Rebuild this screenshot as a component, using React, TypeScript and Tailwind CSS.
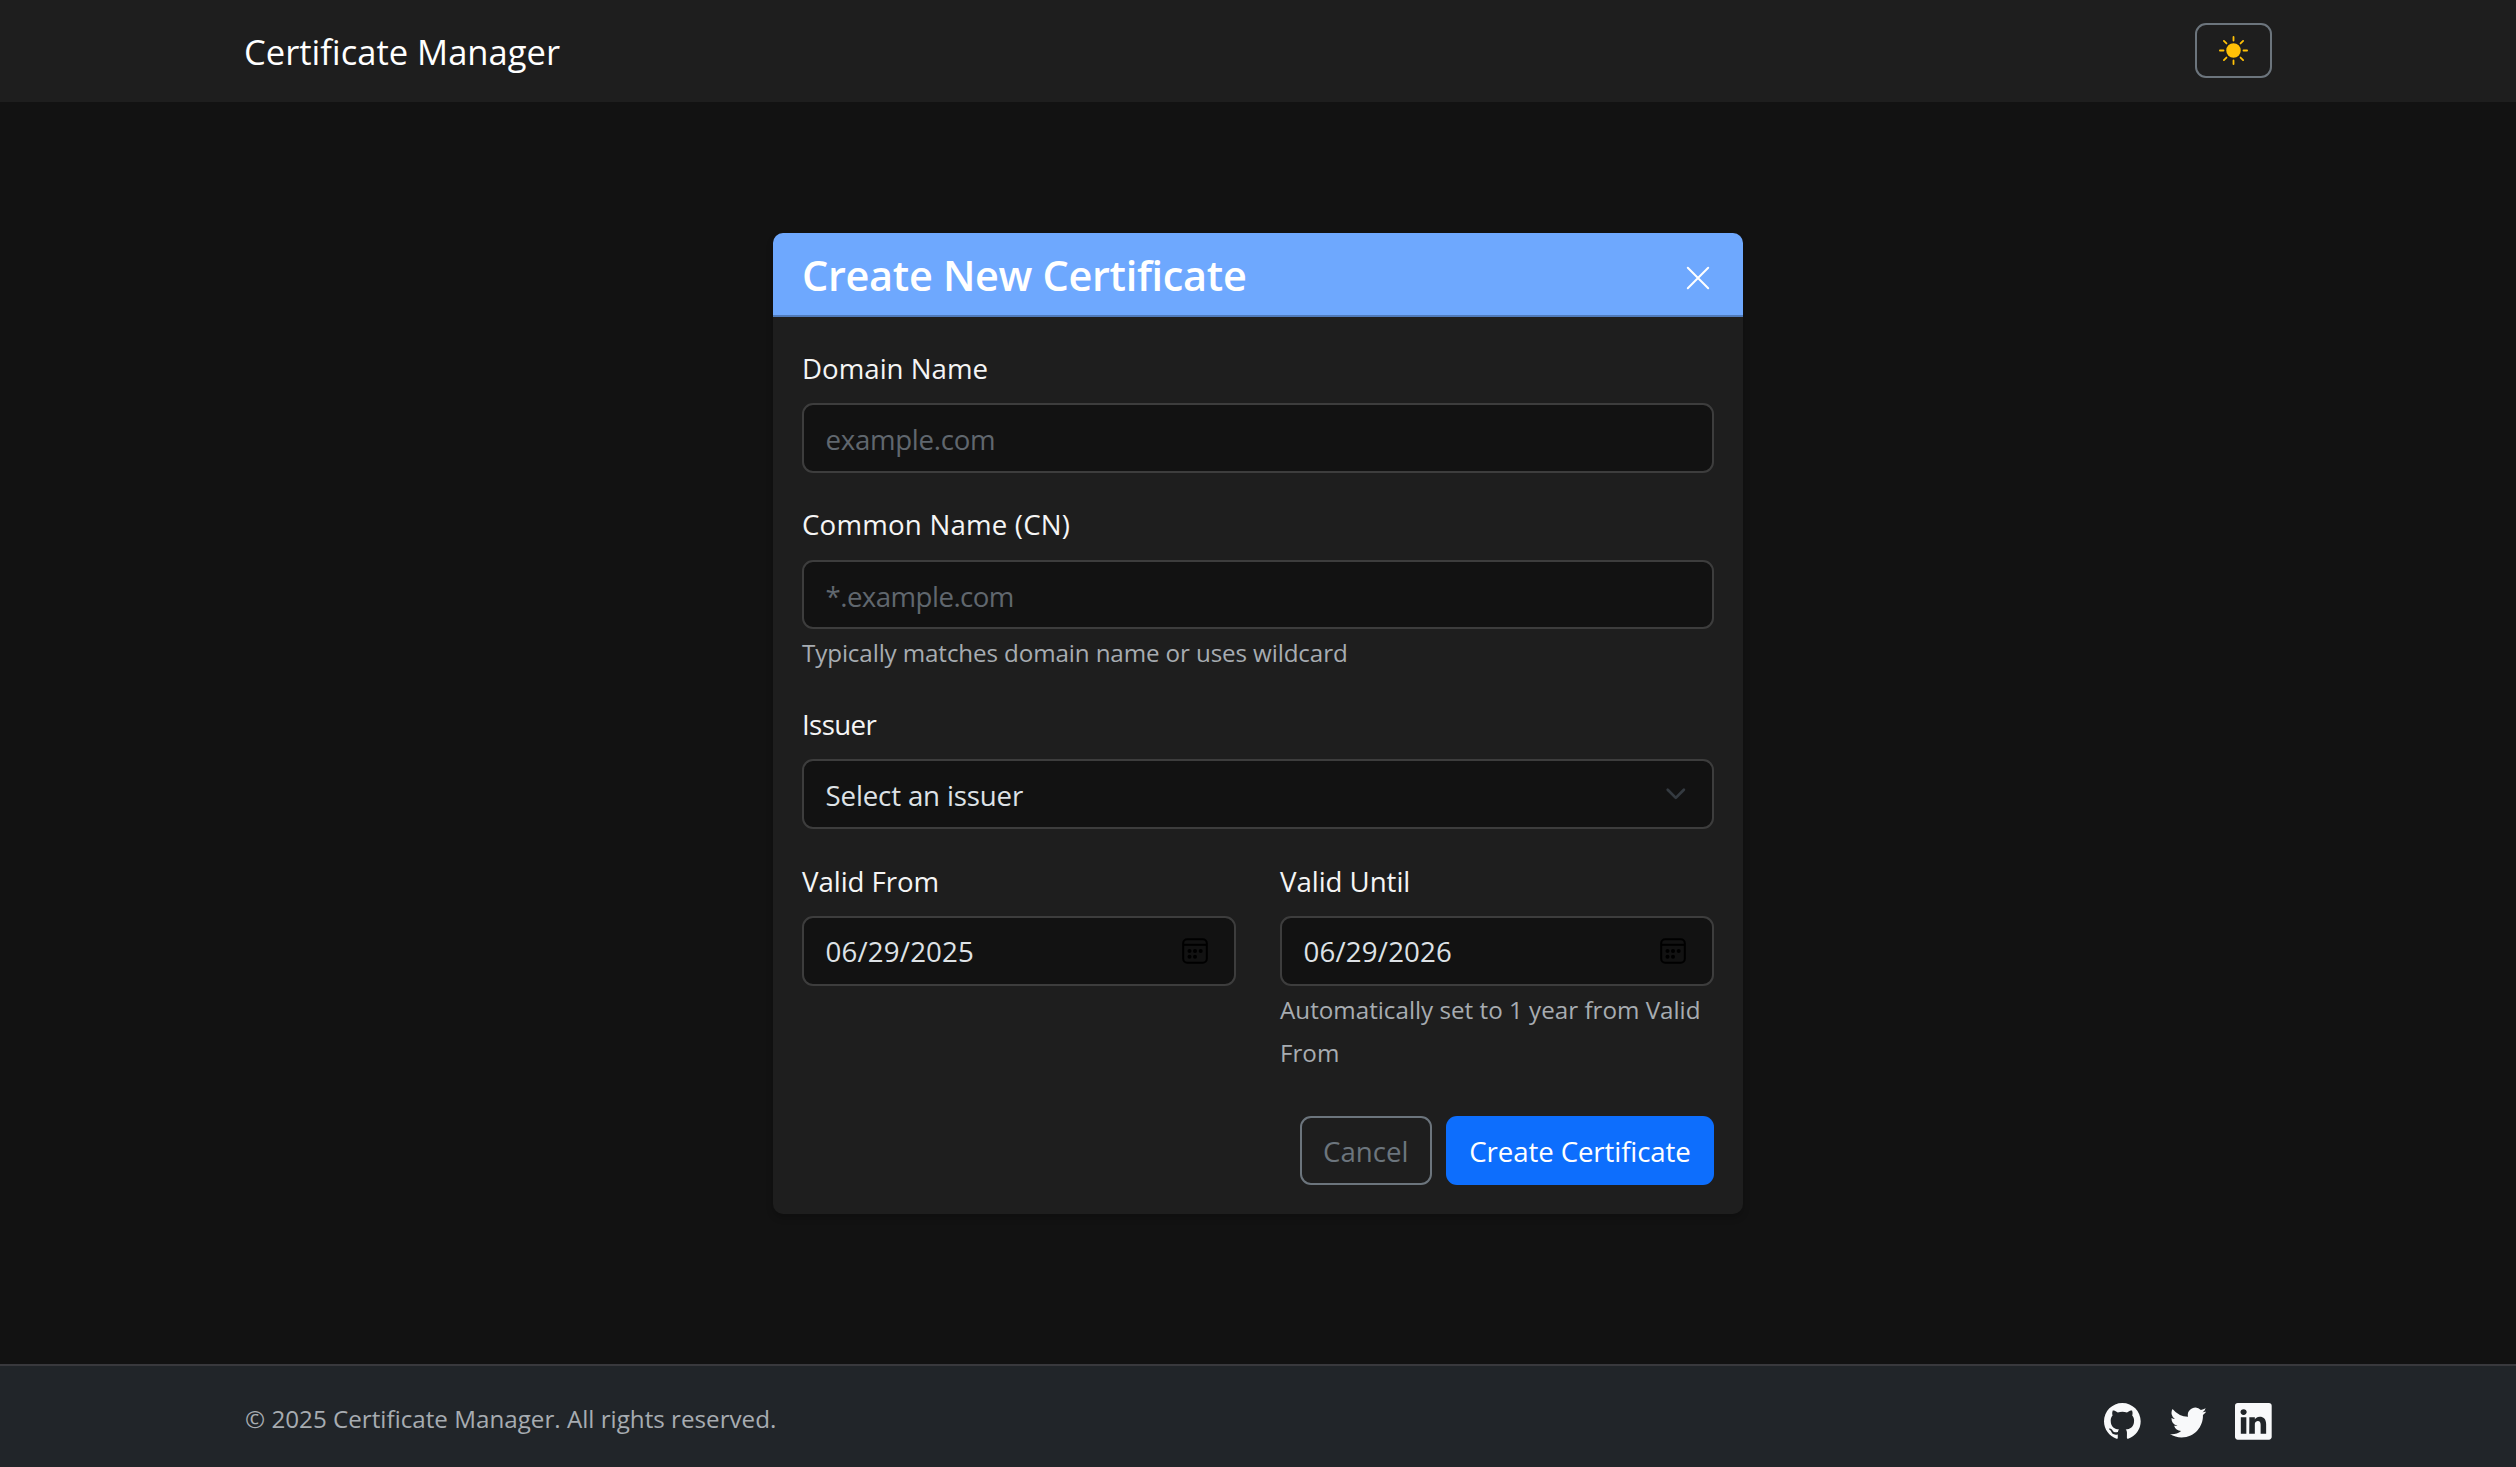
import type { ReactNode } from 'react';
import { BsGithub, BsLinkedin, BsSunFill, BsTwitter } from 'react-icons/bs';

const fieldClass =
  'flex h-[69.6px] w-full items-center justify-between rounded-[11px] border-2 border-[#3d3d3d] bg-[#121212] pl-[21.5px] pr-[26px] text-[27.65px]';

function Label({ children, tracking = '' }: { children: ReactNode; tracking?: string }) {
  return (
    <label className={`block h-[58.2px] pt-[2px] text-[27.65px] leading-[43.2px] text-[#f5f5f5] ${tracking}`}>
      {children}
    </label>
  );
}

function Help({ children, tracking = '' }: { children: ReactNode; tracking?: string }) {
  return (
    <p className={`-mb-[2px] pt-[2px] text-[24.2px] leading-[43.2px] text-[#a7acb1] ${tracking}`}>{children}</p>
  );
}

function CalendarIcon() {
  return (
    <svg className="mr-[0.5px] size-[26px]" viewBox="0 0 26 26" fill="none" stroke="#000" strokeWidth="2">
      <rect x="1.2" y="1.2" width="23.6" height="23.6" rx="4" />
      <path d="M1.2 6.8h23.6" />
      <g fill="#000" stroke="none">
        <circle cx="7.5" cy="13" r="2" />
        <circle cx="13" cy="13" r="2" />
        <circle cx="18.7" cy="13" r="2" />
        <circle cx="7.5" cy="18.7" r="2" />
        <circle cx="13" cy="18.7" r="2" />
      </g>
    </svg>
  );
}

function DateField({ value }: { value: string }) {
  return (
    <div className={fieldClass}>
      <span className="pt-[2px] tracking-[0.19px] text-[#dee2e6]">{value}</span>
      <CalendarIcon />
    </div>
  );
}

export default function App() {
  return (
    <div className="flex h-[1467px] w-[2516px] flex-col bg-[#121212] font-['Open_Sans',sans-serif]">
      <header className="flex h-[102px] shrink-0 items-center justify-between bg-[#1e1e1e] px-[244px]">
        <span className="pt-[2px] text-[34.56px] leading-[54px] text-white">Certificate Manager</span>
        <button className="mb-px flex h-[55px] w-[77px] items-center justify-center rounded-[11px] border-2 border-[#6c757d]">
          <BsSunFill className="size-[29px] text-[#ffc107]" />
        </button>
      </header>

      <main className="flex flex-1 flex-col items-center pt-[130.5px]">
        <section className="h-[981.5px] w-[970px] rounded-[10px] bg-[#1e1e1e] shadow-[0_4px_7px_rgba(0,0,0,0.2)]">
          <div className="flex h-[84.5px] items-center justify-between rounded-t-[10px] border-b-2 border-[#507bbb] bg-[#6ea8fe] pl-[29px] pr-[33.5px]">
            <h1 className="pt-[2px] text-[41.47px] leading-[52px] font-semibold tracking-[-0.33px] text-white">
              Create New Certificate
            </h1>
            <button aria-label="Close" className="pt-[9px]">
              <svg className="size-6" viewBox="0 0 24 24" stroke="#fff" strokeWidth="2" strokeLinecap="round">
                <path d="M1.8 1.8l20.4 20.4M22.2 1.8L1.8 22.2" />
              </svg>
            </button>
          </div>

          <form className="flex flex-col gap-[28.8px] px-[29px] pt-[27.8px]">
            <div>
              <Label>Domain Name</Label>
              <div className={fieldClass}>
                <span className="pt-[4px] tracking-[-0.3px] text-[#60676e]">example.com</span>
              </div>
            </div>
            <div>
              <Label tracking="tracking-[0.2px]">Common Name (CN)</Label>
              <div className={fieldClass}>
                <span className="pt-[4px] tracking-[-0.55px] text-[#60676e]">*.example.com</span>
              </div>
              <Help tracking="tracking-[-0.12px]">Typically matches domain name or uses wildcard</Help>
            </div>
            <div>
              <Label tracking="tracking-[-0.6px]">Issuer</Label>
              <div className={fieldClass}>
                <span className="pt-[3px] tracking-[-0.15px] text-[#dee2e6]">Select an issuer</span>
                <svg
                  className="-mr-[0.5px] size-[21.6px]"
                  viewBox="0 0 16 16"
                  fill="none"
                  stroke="#343a40"
                  strokeWidth="2"
                  strokeLinecap="round"
                  strokeLinejoin="round"
                >
                  <path d="m2 5 6 6 6-6" />
                </svg>
              </div>
            </div>
            <div className="grid grid-cols-2 gap-x-[44px]">
              <div>
                <Label tracking="tracking-[-0.05px]">Valid From</Label>
                <DateField value="06/29/2025" />
              </div>
              <div>
                <Label tracking="tracking-[-0.05px]">Valid Until</Label>
                <DateField value="06/29/2026" />
                <Help>Automatically set to 1 year from Valid From</Help>
              </div>
            </div>
            <div className="flex justify-end gap-[14.5px] pt-[15px] text-[27.65px]">
              <button className="h-[69.6px] w-[131.5px] rounded-[11px] border-2 border-[#6c757d] pt-[2px] text-[#6c757d]">
                Cancel
              </button>
              <button className="h-[69.6px] w-[268px] rounded-[11px] bg-[#0d6efd] pt-[2px] tracking-[-0.11px] text-white">
                Create Certificate
              </button>
            </div>
          </form>
        </section>
      </main>

      <footer className="flex h-[103px] shrink-0 items-center justify-between border-t-2 border-[#39393d] bg-[#212529] px-[244px]">
        <span className="pl-px pt-[6px] text-[24.2px] text-[#a7acb1]">
          © 2025 Certificate Manager. All rights reserved.
        </span>
        <div className="flex gap-[29px] pt-[10px] text-[#f8f9fa]">
          <BsGithub className="size-[36.7px]" />
          <BsTwitter className="size-[36.7px]" />
          <BsLinkedin className="size-[36.7px]" />
        </div>
      </footer>
    </div>
  );
}
